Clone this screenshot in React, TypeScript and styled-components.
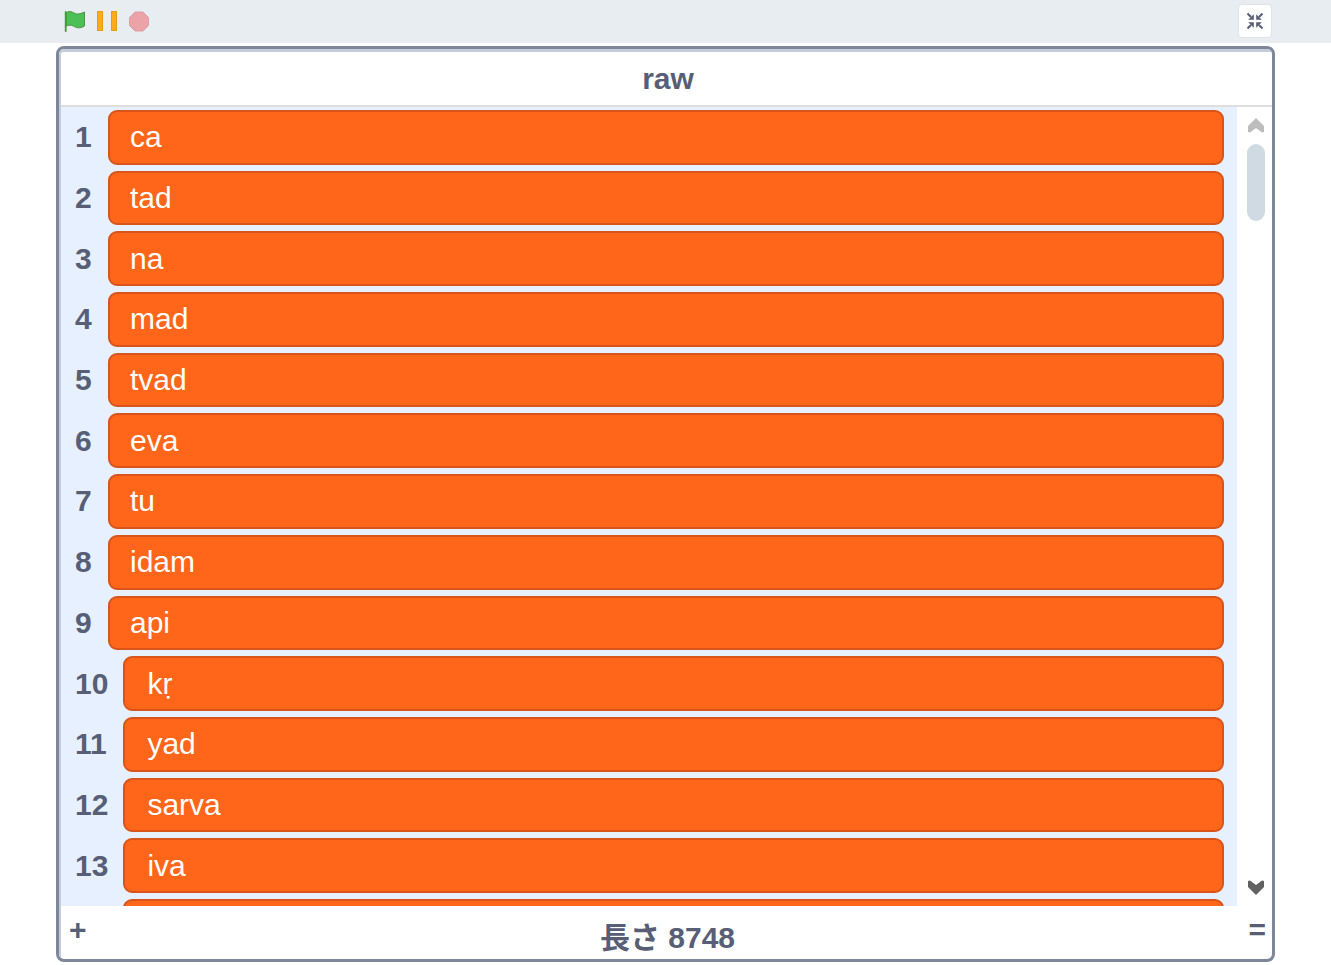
import React from 'react';
import styled, { createGlobalStyle } from 'styled-components';

const GlobalStyle = createGlobalStyle`
	html, body {
		margin: 0;
		padding: 0;
		background: #fff;
		overflow: hidden;
	}
	body {
		font-family: 'Liberation Sans', Arial, 'Noto Sans CJK JP', sans-serif;
	}
`;

const Page = styled.div`
	width: 1331px;
	height: 965px;
	display: flex;
	flex-direction: column;
`;

const ControlBar = styled.header`
	height: 43px;
	flex: none;
	background: #e8edf1;
	display: flex;
	align-items: flex-start;
	justify-content: space-between;
	padding: 4px 59px 0 64px;
	box-sizing: border-box;
`;

const Controls = styled.div`
	display: flex;
	align-items: center;
	gap: 11px;
	height: 34px;
`;

const Icon = styled.svg`
	display: block;
`;

const ShrinkButton = styled.button`
	width: 34px;
	height: 34px;
	padding: 0;
	box-sizing: border-box;
	background: #fff;
	border: 1px solid #dfe3e8;
	border-radius: 4px;
	display: flex;
	align-items: center;
	justify-content: center;
`;

const Monitor = styled.section`
	margin: 3px 56px 0 56px;
	height: 916px;
	box-sizing: border-box;
	border: 3px solid #7e8699;
	border-radius: 8px;
	background: #fff;
	display: flex;
	flex-direction: column;
	overflow: hidden;
`;

const Inner = styled.div`
	flex: 1;
	min-height: 0;
	display: flex;
	flex-direction: column;
	border-top: 3px solid #c4cbda;
	border-left: 2px solid #c4cbda;
	border-radius: 5px 0 0 0;
`;

const Title = styled.div`
	height: 55px;
	flex: none;
	box-sizing: border-box;
	padding: 0 0 0 3px;
	border-bottom: 2px solid #dedede;
	display: flex;
	align-items: center;
	justify-content: center;
	font-size: 30px;
	font-weight: bold;
	color: #575e75;
`;

const Body = styled.div`
	flex: 1;
	min-height: 0;
	display: flex;
`;

const List = styled.div`
	flex: 1;
	min-width: 0;
	background: #e6f0ff;
	padding: 3px 13px 0 14px;
	display: flex;
	flex-direction: column;
	gap: 6px;
	overflow: hidden;
`;

const Row = styled.div`
	flex: none;
	height: 54.7px;
	display: flex;
	align-items: center;
	gap: 15px;
`;

const Index = styled.span<{ $wide?: boolean }>`
	flex: none;
	min-width: ${(p) => (p.$wide ? '33.4px' : '18px')};
	font-size: 30px;
	font-weight: bold;
	color: #575e75;
`;

const Value = styled.div<{ $wide?: boolean }>`
	flex: 1;
	height: 100%;
	box-sizing: border-box;
	background: #ff6619;
	border: 2px solid #d9541a;
	border-radius: 9px;
	padding-left: ${(p) => (p.$wide ? '22px' : '20px')};
	display: flex;
	align-items: center;
	font-size: 30px;
	color: #fff;
`;

const Scroller = styled.div`
	width: 35px;
	flex: none;
	background: #fff;
	display: flex;
	flex-direction: column;
	align-items: center;
	padding: 9px 0 9px 3px;
	box-sizing: border-box;
`;

const Thumb = styled.div`
	width: 18px;
	height: 77px;
	margin-top: 10px;
	border-radius: 9px;
	background: #d0dae3;
`;

const ArrowSlot = styled.div`
	margin-top: auto;
`;

const Arrow = styled.svg<{ $down?: boolean }>`
	display: block;
	filter: blur(0.5px);
	transform: ${(p) => (p.$down ? 'scaleY(-1)' : 'none')};
`;

const Footer = styled.footer`
	height: 53px;
	flex: none;
	padding: 0 6px 0 8px;
	display: flex;
	justify-content: space-between;
	font-weight: bold;
	color: #575e75;
	font-size: 30px;
	line-height: 1;
`;

const FooterKey = styled.span`
	margin-top: 9px;
`;

const Length = styled.span`
	margin-top: 17px;
`;

const items = ['ca', 'tad', 'na', 'mad', 'tvad', 'eva', 'tu', 'idam', 'api', 'kṛ', 'yad', 'sarva', 'iva', ''];

const ScrollArrow: React.FC<{ color: string; down?: boolean }> = ({ color, down }) => (
	<Arrow width="18" height="18" viewBox="0 0 18 18" $down={down}>
		<path d="M1 10 9 2l8 8v6l-2 .5L9 12l-6 4.500L1 16z" fill={color} />
	</Arrow>
);

export default function App() {
	return (
		<Page>
			<GlobalStyle />
			<ControlBar>
				<Controls>
					<Icon width="22" height="22" viewBox="0 0 22 22">
						<path
							d="M2 3c2-1.500 4-1.800 6-1 2 .9 4.500 2.500 6.500 2 2-.3 4-1 6-2v14c-2 1.200-4.300 2-6.500 1.800-2.500-.3-4.500-2-6.500-2.500-2-.4-4 0-5.500 1z"
							fill="#4cbf56"
							stroke="#45993d"
							strokeWidth="1"
							strokeLinejoin="round"
						/>
						<path d="M1.700 2v19" stroke="#45993d" strokeWidth="1.800" strokeLinecap="round" />
					</Icon>
					<Icon width="20" height="21" viewBox="0 0 20 21">
						<rect x=".5" y=".5" width="5" height="19" fill="#ffab19" stroke="#e59c13" />
						<rect x="14.500" y=".5" width="5" height="19" fill="#ffab19" stroke="#e59c13" />
					</Icon>
					<Icon width="21" height="21" viewBox="0 0 21 21">
						<path
							d="M7 1h8L20.500 6.500v8L15 20H7L1.500 14.500v-8z"
							fill="#eba3a8"
							stroke="#dd9ea3"
						/>
					</Icon>
				</Controls>
				<ShrinkButton>
					<Icon width="18" height="18" viewBox="0 0 18 18">
						<g fill="#575e75">
							<path d="M7.800 7.800H2.200L7.800 2.200z" />
							<path d="M10.200 7.800h5.600l-5.600-5.600z" />
							<path d="M7.800 10.200H2.200l5.600 5.600z" />
							<path d="M10.200 10.200h5.600l-5.600 5.600z" />
						</g>
						<path
							d="M1.500 1.500l3.500 3.500M16.500 1.500L13 5M1.500 16.500L5 13M16.500 16.500L13 13"
							stroke="#575e75"
							strokeWidth="2"
						/>
					</Icon>
				</ShrinkButton>
			</ControlBar>
			<Monitor>
				<Inner>
					<Title>raw</Title>
					<Body>
						<List>
							{items.map((item, i) => (
								<Row key={i}>
									<Index $wide={i >= 9}>{item ? i + 1 : ''}</Index>
									<Value $wide={i >= 9}>{item}</Value>
								</Row>
							))}
						</List>
						<Scroller>
							<ScrollArrow color="#bdbdbd" />
							<Thumb />
							<ArrowSlot>
								<ScrollArrow color="#616161" down />
							</ArrowSlot>
						</Scroller>
					</Body>
					<Footer>
						<FooterKey>+</FooterKey>
						<Length>長さ 8748</Length>
						<FooterKey>=</FooterKey>
					</Footer>
				</Inner>
			</Monitor>
		</Page>
	);
}
